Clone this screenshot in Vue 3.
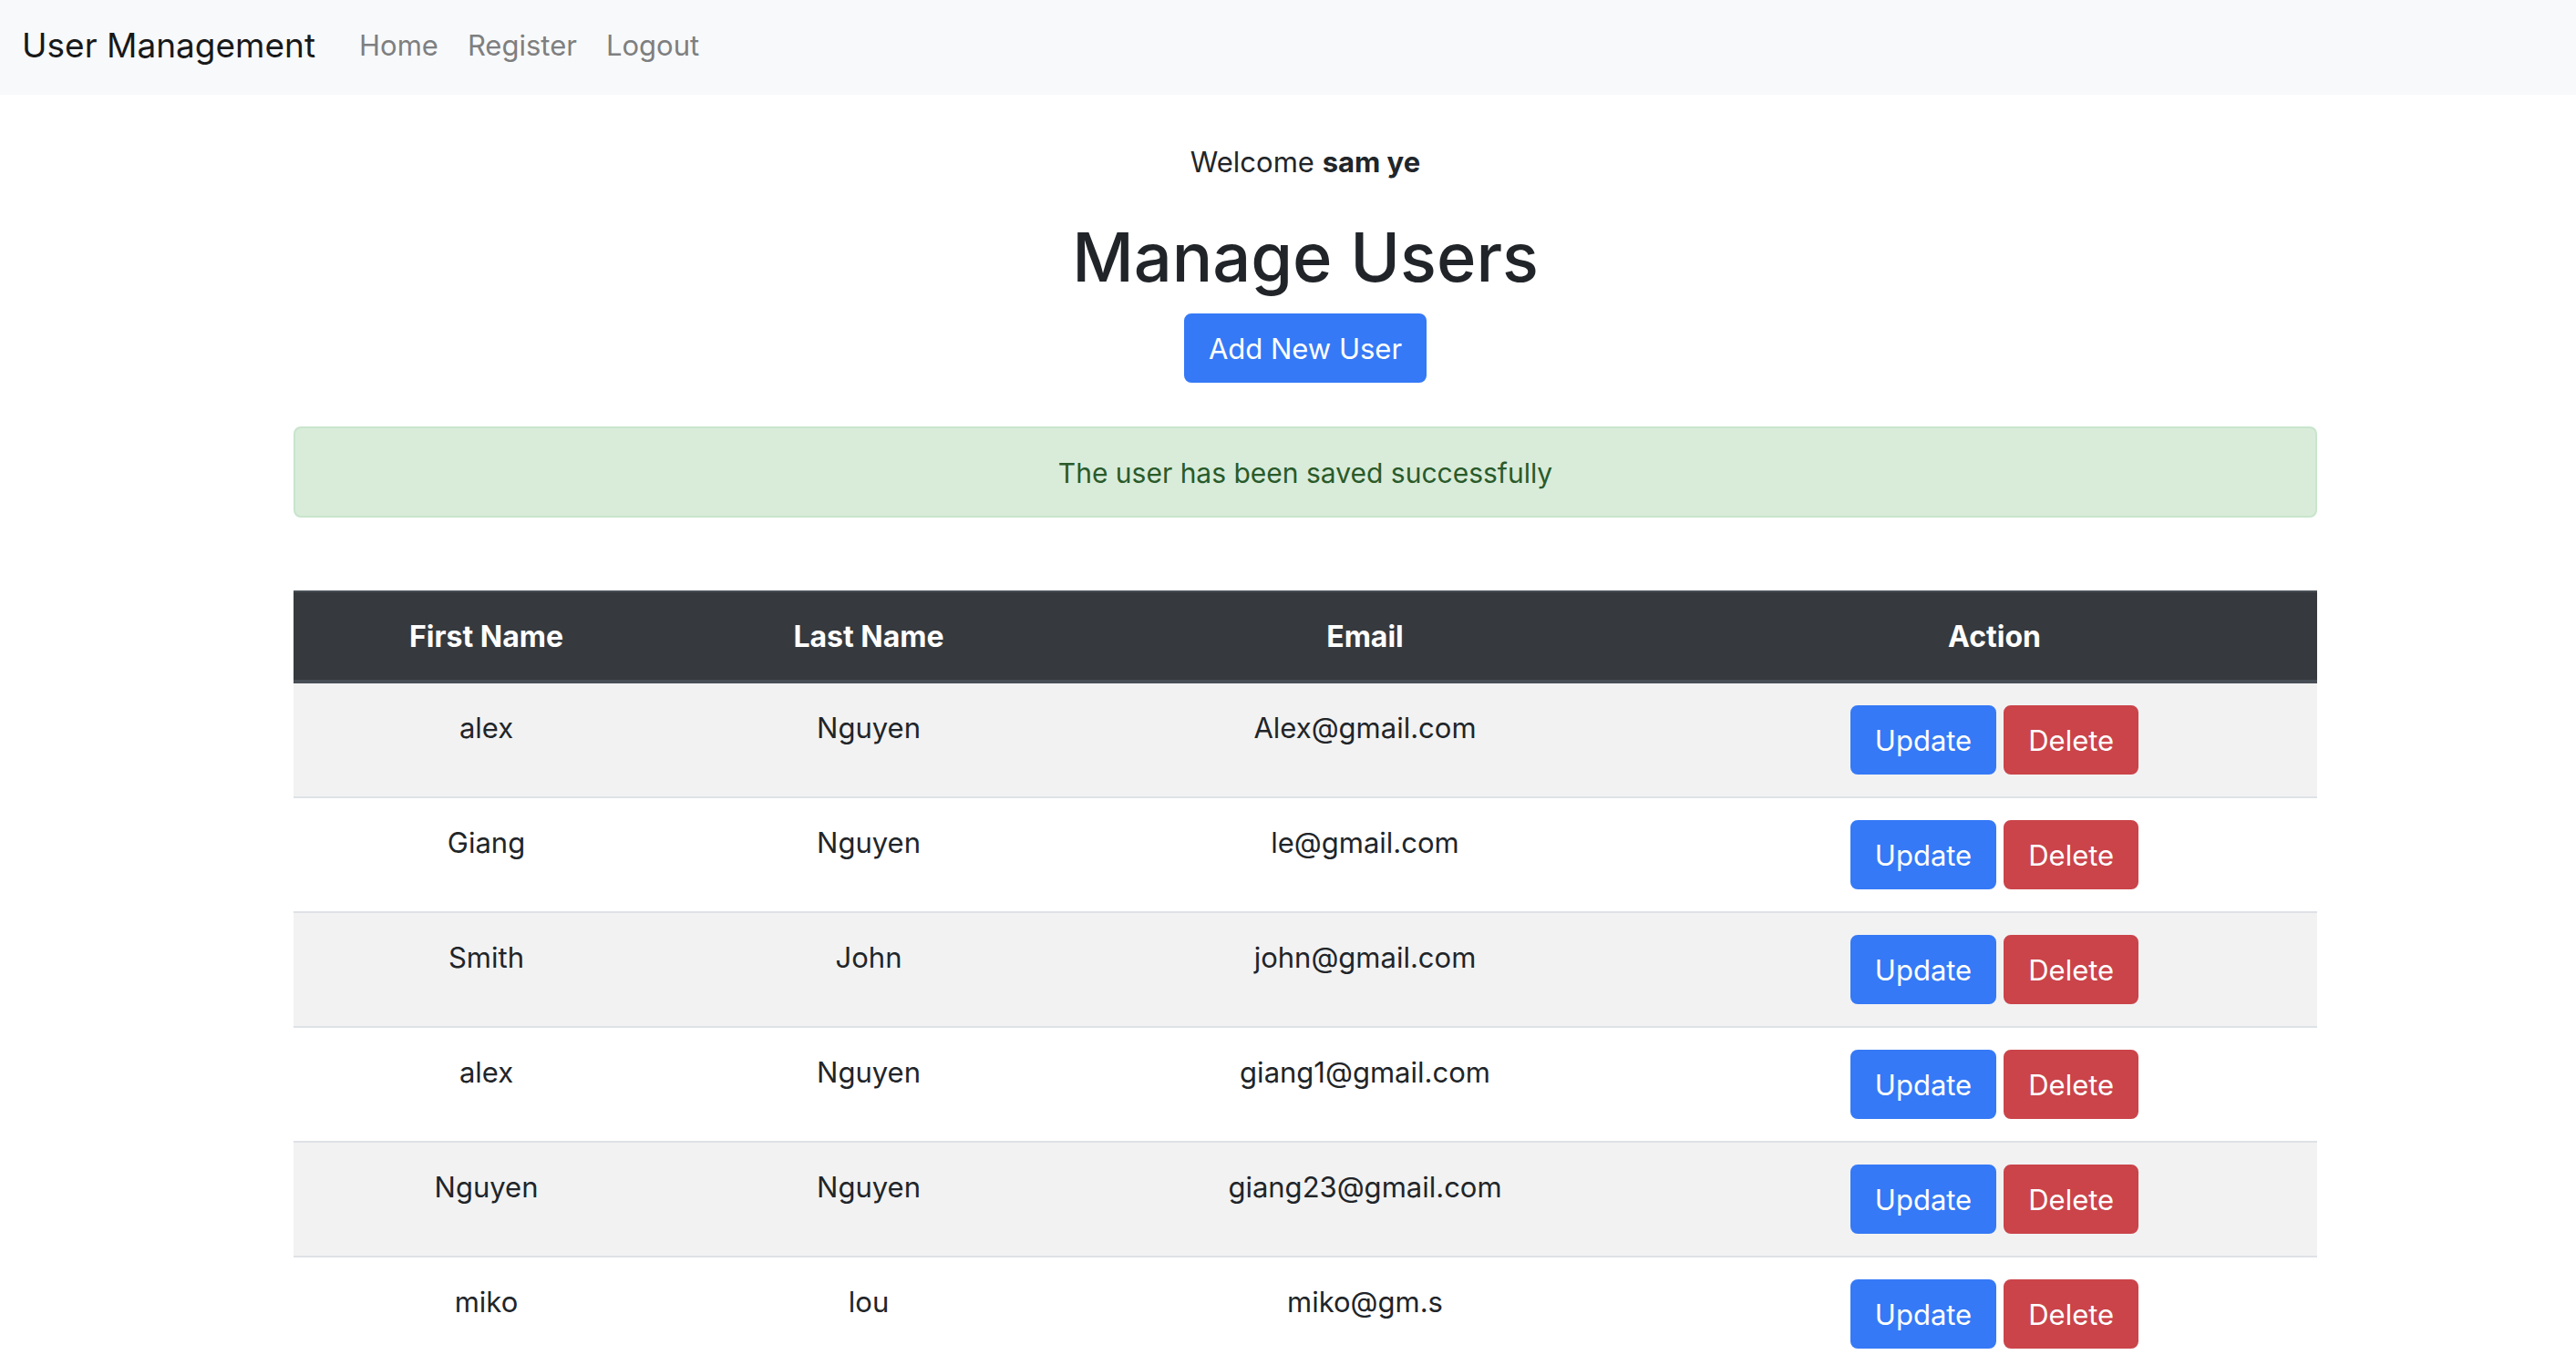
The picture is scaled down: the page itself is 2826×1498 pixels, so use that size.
<script setup>
const links = ['Home', 'Register', 'Logout']

const users = [
  { first: 'alex', last: 'Nguyen', email: 'Alex@gmail.com' },
  { first: 'Giang', last: 'Nguyen', email: 'le@gmail.com' },
  { first: 'Smith', last: 'John', email: 'john@gmail.com' },
  { first: 'alex', last: 'Nguyen', email: 'giang1@gmail.com' },
  { first: 'Nguyen', last: 'Nguyen', email: 'giang23@gmail.com' },
  { first: 'miko', last: 'lou', email: 'miko@gm.s' },
]
</script>

<template>
  <div class="page">
    <nav class="navbar">
      <a class="brand" href="#">User Management</a>
      <ul class="nav-list">
        <li v-for="link in links" :key="link">
          <a class="nav-link" href="#">{{ link }}</a>
        </li>
      </ul>
    </nav>

    <main class="main">
      <div class="container">
        <p class="welcome">Welcome <strong>sam ye</strong></p>
        <h1>Manage Users</h1>
        <button type="button" class="btn primary">Add New User</button>
        <div class="alert" role="alert">The user has been saved successfully</div>

        <table>
          <colgroup>
            <col class="col-first" />
            <col class="col-last" />
            <col class="col-email" />
            <col />
          </colgroup>
          <thead>
            <tr>
              <th scope="col">First Name</th>
              <th scope="col">Last Name</th>
              <th scope="col">Email</th>
              <th scope="col">Action</th>
            </tr>
          </thead>
          <tbody>
            <tr v-for="user in users" :key="user.email">
              <td>{{ user.first }}</td>
              <td>{{ user.last }}</td>
              <td>{{ user.email }}</td>
              <td class="action-cell">
                <div class="actions">
                  <button type="button" class="btn primary">Update</button>
                  <button type="button" class="btn danger">Delete</button>
                </div>
              </td>
            </tr>
          </tbody>
        </table>
      </div>
    </main>
  </div>
</template>

<style>
body {
  margin: 0;
  background: #fff;
}
</style>

<style scoped>
.page {
  font-family: Inter, "Liberation Sans", sans-serif;
  font-size: 31px;
  line-height: 48px;
  color: #212529;
}

.navbar {
  display: flex;
  align-items: center;
  gap: 48px;
  height: 100px;
  padding: 0 24px 4px;
  background: #f8f9fb;
}

.brand {
  font-size: 37px;
  line-height: 60px;
  color: #18191a;
  text-decoration: none;
}

.nav-list {
  display: flex;
  gap: 32px;
  margin: 0;
  padding: 0;
  list-style: none;
}

.nav-link {
  color: #7e7f80;
  text-decoration: none;
}

.main {
  padding: 50px 0 0 38px;
}

.container {
  max-width: 2220px;
  margin: 0 auto;
  text-align: center;
}

.welcome {
  margin: 0 0 32px;
}

h1 {
  margin: 0 0 14px;
  font-size: 74px;
  font-weight: 500;
  line-height: 96px;
}

.btn {
  display: block;
  padding: 13px 25px 11px;
  border: 2px solid transparent;
  border-radius: 8px;
  font: inherit;
  color: #fff;
  cursor: pointer;
}

.container > .btn {
  margin: 0 auto;
}

.primary {
  background: #3579f6;
  border-color: #3579f6;
}

.danger {
  background: #ca444a;
  border-color: #ca444a;
}

.alert {
  margin: 48px 0 80px;
  padding: 25px 40px 23px;
  border: 2px solid #c8e5cc;
  border-radius: 8px;
  background: #d9ecda;
  color: #2a5a2a;
  font-size: 30px;
}

table {
  width: 100%;
  table-layout: fixed;
  border-spacing: 0;
}

.col-first {
  width: 423px;
}

.col-last {
  width: 416px;
}

.col-email {
  width: 673px;
}

th {
  padding: 25px 24px 23px;
  border-top: 2px solid #484e55;
  border-bottom: 4px solid #484e55;
  background: #363a3e;
  color: #fff;
  font-size: 32px;
  font-weight: 700;
}

td {
  padding: 25px 24px 23px;
  border-top: 2px solid #dee2e6;
  vertical-align: top;
}

.action-cell {
  padding: 24px;
}

tbody tr:first-child td {
  border-top: 0;
}

tbody tr:nth-child(odd) td {
  background: #f2f2f2;
}

.actions {
  display: flex;
  justify-content: center;
  gap: 8px;
}
</style>
